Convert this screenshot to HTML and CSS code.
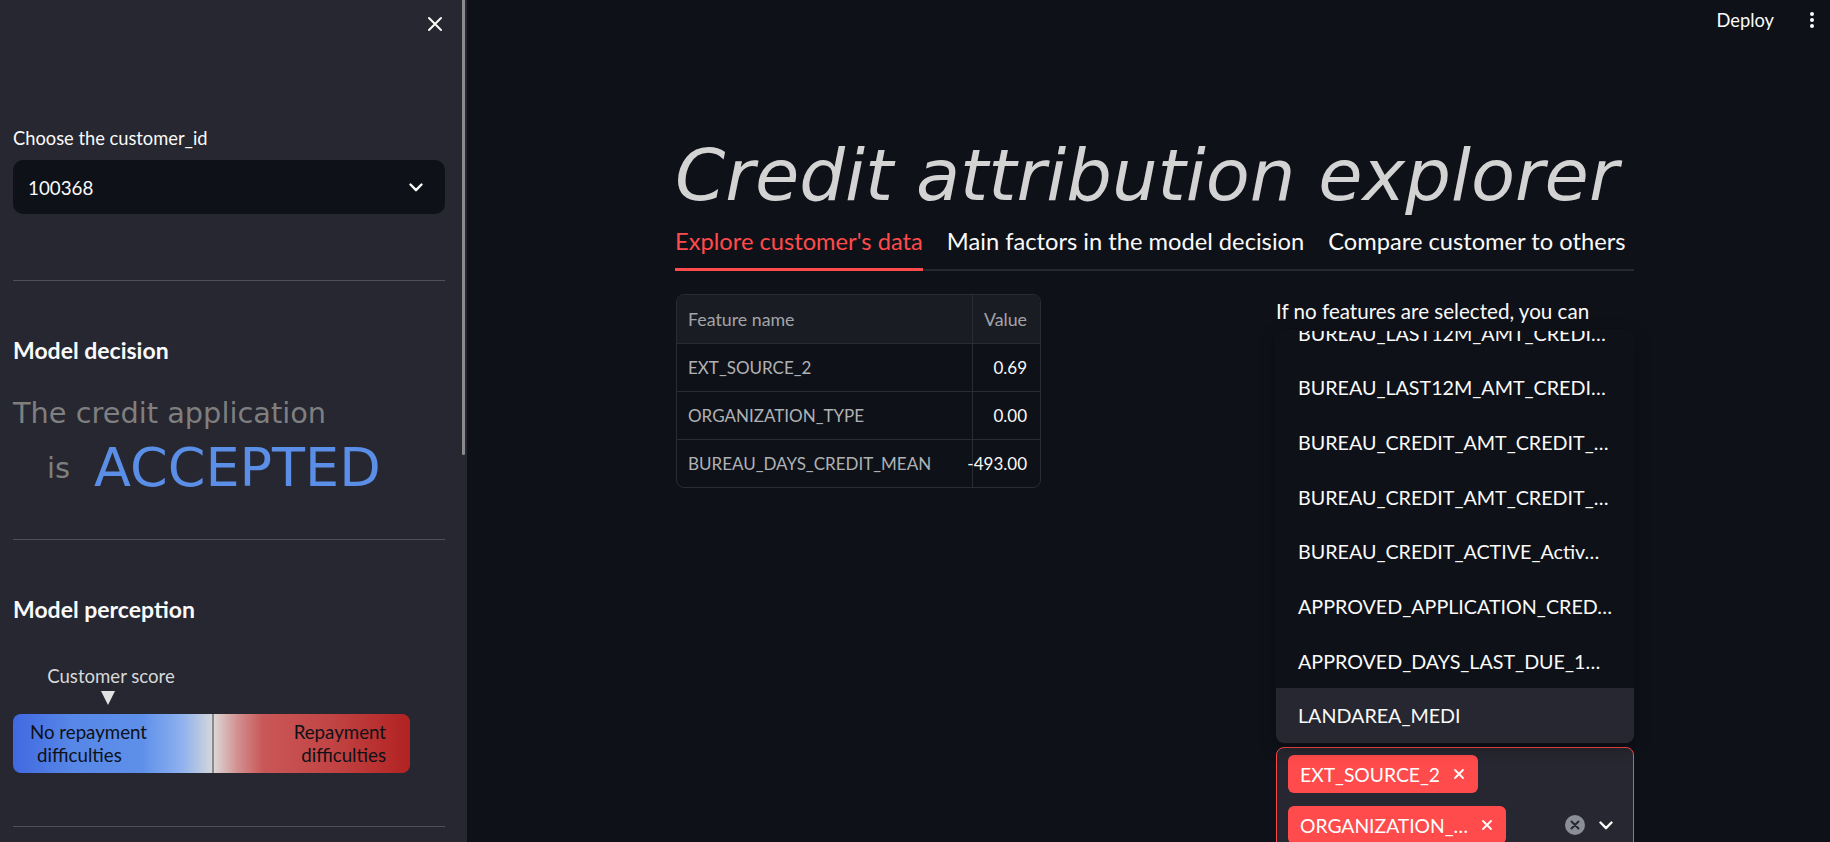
FILE: index.html
```html
<!DOCTYPE html>
<html lang="en">
<head>
<meta charset="utf-8">
<title>Credit attribution explorer</title>
<link rel="stylesheet" href="styles.css">
</head>
<body>
<div class="app">
  <aside class="sidebar">
    <div class="sb-thumb"></div>
    <div class="sb-header">
      <svg class="close" viewBox="0 0 16 16" aria-label="Close sidebar"><path d="M2 2 L14 14 M14 2 L2 14" stroke="#fafafa" stroke-width="2" stroke-linecap="round" fill="none"/></svg>
    </div>
    <label class="sb-label">Choose the customer_id</label>
    <div class="select">
      <span class="select-value">100368</span>
      <svg class="chev" viewBox="0 0 14 9"><path d="M1.5 1.5 L7 7.2 L12.5 1.5" stroke="#fafafa" stroke-width="2.4" stroke-linecap="round" stroke-linejoin="round" fill="none"/></svg>
    </div>
    <hr class="sb-hr hr1">
    <h3 class="sb-h">Model decision</h3>
    <div class="decision-1">The credit application</div>
    <div class="decision-2"><span class="is">is</span><span class="accepted">ACCEPTED</span></div>
    <hr class="sb-hr hr2">
    <h3 class="sb-h">Model perception</h3>
    <div class="score-track">
      <div class="score-marker" style="margin-left:95px">
        <span class="score-label">Customer score</span>
        <span class="tri"></span>
      </div>
    </div>
    <div class="gauge">
      <div class="gauge-half gauge-left"><span>No repayment<br><span class="indent">difficulties</span></span></div>
      <div class="gauge-half gauge-right"><span>Repayment<br>difficulties</span></div>
    </div>
    <hr class="sb-hr hr3">
  </aside>

  <main class="main">
    <div class="topbar">
      <span class="deploy">Deploy</span>
      <span class="kebab"><i></i><i></i><i></i></span>
    </div>
    <div class="content">
      <h1 class="title">Credit attribution explorer</h1>
      <div class="tabs">
        <span class="tab active">Explore customer's data</span>
        <span class="tab">Main factors in the model decision</span>
        <span class="tab">Compare customer to others</span>
      </div>
      <div class="columns">
        <div class="col-left">
          <div class="df">
            <div class="df-row df-head"><div class="c1">Feature name</div><div class="c2">Value</div></div>
            <div class="df-row"><div class="c1">EXT_SOURCE_2</div><div class="c2"><span>0.69</span></div></div>
            <div class="df-row"><div class="c1">ORGANIZATION_TYPE</div><div class="c2"><span>0.00</span></div></div>
            <div class="df-row"><div class="c1">BUREAU_DAYS_CREDIT_MEAN</div><div class="c2"><span>-493.00</span></div></div>
          </div>
        </div>
        <div class="col-right">
          <p class="help">If no features are selected, you can</p>
          <div class="ms">
            <div class="tags">
              <span class="tag">EXT_SOURCE_2<svg viewBox="0 0 12 12"><path d="M2 2 L10 10 M10 2 L2 10" stroke="#fff" stroke-width="1.8" stroke-linecap="round"/></svg></span>
              <span class="tag">ORGANIZATION_…<svg viewBox="0 0 12 12"><path d="M2 2 L10 10 M10 2 L2 10" stroke="#fff" stroke-width="1.8" stroke-linecap="round"/></svg></span>
              <span class="tag">BUREAU_DAYS_…<svg viewBox="0 0 12 12"><path d="M2 2 L10 10 M10 2 L2 10" stroke="#fff" stroke-width="1.8" stroke-linecap="round"/></svg></span>
            </div>
            <div class="ms-icons">
              <svg class="clear" viewBox="0 0 20 20"><circle cx="10" cy="10" r="10" fill="#8c8e97"/><path d="M6.5 6.5 L13.5 13.5 M13.5 6.5 L6.5 13.5" stroke="#262730" stroke-width="2" stroke-linecap="round"/></svg>
              <svg class="chev" viewBox="0 0 14 9"><path d="M1.5 1.5 L7 7.2 L12.5 1.5" stroke="#fafafa" stroke-width="2.4" stroke-linecap="round" stroke-linejoin="round" fill="none"/></svg>
            </div>
          </div>
          <div class="popover">
            <div class="opt">BUREAU_LAST12M_AMT_CREDI…</div>
            <div class="opt">BUREAU_LAST12M_AMT_CREDI…</div>
            <div class="opt">BUREAU_CREDIT_AMT_CREDIT_…</div>
            <div class="opt">BUREAU_CREDIT_AMT_CREDIT_…</div>
            <div class="opt">BUREAU_CREDIT_ACTIVE_Activ…</div>
            <div class="opt">APPROVED_APPLICATION_CRED…</div>
            <div class="opt">APPROVED_DAYS_LAST_DUE_1…</div>
            <div class="opt hover">LANDAREA_MEDI</div>
          </div>
        </div>
      </div>
    </div>
  </main>
</div>
</body>
</html>
```

FILE: styles.css
```css
html, body {
  margin: 0;
  padding: 0;
}
body {
  background: #0e1117;
  color: #fafafa;
  font-family: "Lato", "Noto Sans", sans-serif;
}
.app {
  display: flex;
  height: 842px;
  overflow: hidden;
}

/* ---------- sidebar ---------- */
.sidebar {
  position: relative;
  flex: none;
  width: 467px;
  height: 842px;
  box-sizing: border-box;
  padding: 0 22px 0 13px;
  background: #262730;
  overflow: hidden;
}
.sb-thumb {
  position: absolute;
  left: 462px;
  top: 0;
  width: 3px;
  height: 455px;
  background: #8a8a8c;
  border-radius: 0 0 2px 2px;
}
.sb-header {
  height: 48px;
  display: flex;
  justify-content: flex-end;
  align-items: center;
  padding-right: 2px;
}
.close {
  width: 16px;
  height: 16px;
}
.sb-label {
  display: block;
  margin-top: 77px;
  font-size: 18.3px;
  line-height: 26px;
}
.select {
  margin-top: 9px;
  height: 54px;
  box-sizing: border-box;
  border-radius: 10px;
  background: #0e1117;
  display: flex;
  align-items: center;
  justify-content: space-between;
  padding: 0 22px 0 15px;
}
.select-value {
  font-size: 18.8px;
}
.chev {
  width: 14px;
  height: 9px;
}
.sb-hr {
  border: 0;
  height: 1px;
  background: #4f5058;
  margin: 0;
}
.hr1 { margin-top: 66px; }
.hr2 { margin-top: 39px; }
.hr3 { margin-top: 53px; }
.sb-h {
  margin: 54px 0 0;
  font-size: 23px;
  line-height: 30px;
  font-weight: 700;
}
.decision-1 {
  margin-top: 31px;
  font-family: "DejaVu Sans", sans-serif;
  font-size: 28.8px;
  line-height: 34px;
  color: #7f7f7f;
  white-space: nowrap;
}
.decision-2 {
  margin-top: 6px;
  height: 64px;
  display: flex;
  align-items: center;
  font-family: "DejaVu Sans", sans-serif;
  color: #7f7f7f;
  white-space: nowrap;
}
.is {
  margin-left: 34px;
  font-size: 28.8px;
  line-height: 34px;
}
.accepted {
  margin-left: 24px;
  font-size: 54px;
  line-height: 64px;
  color: #5b8ee6;
}
.score-track {
  margin-top: 39px;
  height: 42px;
}
.score-marker {
  width: 0;
  display: flex;
  flex-direction: column;
  align-items: center;
}
.score-label {
  font-size: 18.6px;
  line-height: 26px;
  white-space: nowrap;
  color: #d8d8da;
  padding-left: 6px;
}
.tri {
  margin-top: 2px;
  width: 0;
  height: 0;
  border-left: 7px solid transparent;
  border-right: 7px solid transparent;
  border-top: 14px solid #e2e2e2;
}
.gauge {
  margin-top: 9px;
  width: 397px;
  height: 59px;
  border-radius: 8px;
  overflow: hidden;
  display: flex;
}
.gauge-half {
  flex: none;
  width: 50%;
  box-sizing: border-box;
  display: flex;
  align-items: center;
  font-size: 18.7px;
  line-height: 23px;
  color: #0e1117;
  white-space: nowrap;
}
.gauge-left {
  padding-left: 17px;
  background: linear-gradient(to right, #4169e1 0%, #5787e7 30%, #5e90ea 65%, #8fb1ee 85%, #d3d6db 100%);
}
.indent {
  padding-left: 7px;
}
.gauge-right {
  justify-content: flex-end;
  text-align: right;
  padding-right: 24px;
  border-left: 2px solid #8a8a8a;
  background: linear-gradient(to right, #dcd6d6 0%, #d29090 12%, #c95757 25%, #c24444 60%, #b22222 100%);
}

/* ---------- main ---------- */
.main {
  flex: 1;
  min-width: 0;
  position: relative;
}
.topbar {
  height: 40px;
  display: flex;
  justify-content: flex-end;
  align-items: center;
  gap: 36px;
  padding-right: 16px;
}
.deploy {
  font-size: 18.3px;
  line-height: 26px;
}
.kebab {
  display: flex;
  flex-direction: column;
  gap: 2.3px;
}
.kebab i {
  display: block;
  width: 4px;
  height: 4px;
  border-radius: 50%;
  background: #fafafa;
}
.content {
  width: 959px;
  margin-left: 208px;
  padding-top: 92px;
}
.title {
  margin: 0;
  font-family: "DejaVu Sans", sans-serif;
  font-style: italic;
  font-weight: 400;
  font-size: 72px;
  line-height: 86px;
  color: #d3d3d3;
  white-space: nowrap;
}
.tabs {
  margin-top: 6px;
  display: flex;
  gap: 24px;
  border-bottom: 2px solid #262730;
}
.tab {
  font-size: 23.7px;
  line-height: 34px;
  padding-bottom: 10px;
  border-bottom: 3px solid transparent;
  margin-bottom: -2px;
  color: #fafafa;
  white-space: nowrap;
}
.tab.active {
  color: #ff4b4b;
  border-bottom-color: #ff4b4b;
}
.columns {
  margin-top: 23px;
  display: grid;
  grid-template-columns: 579px 358px;
  column-gap: 22px;
  align-items: start;
}

/* dataframe */
.df {
  margin-left: 1px;
  width: 365px;
  box-sizing: border-box;
  border: 1px solid #2a2c33;
  border-radius: 8px;
  overflow: hidden;
  font-size: 17px;
}
.df-row {
  display: grid;
  grid-template-columns: 295px 1fr;
  height: 48px;
  box-sizing: border-box;
  border-top: 1px solid #2a2c33;
}
.df-row.df-head {
  border-top: 0;
  background: #1a1c24;
  color: #a3a4a8;
  font-size: 17.8px;
}
.c1 {
  display: flex;
  align-items: center;
  padding-left: 11px;
  color: #b0b1b5;
  white-space: nowrap;
}
.df-head .c1 { color: #a3a4a8; }
.c2 {
  display: flex;
  align-items: center;
  justify-content: flex-end;
  padding-right: 13px;
  border-left: 1px solid #2a2c33;
  white-space: nowrap;
  min-width: 0;
}
.c2 span { flex: none; }

/* right column */
.col-right {
  position: relative;
}
.help {
  margin: 0;
  min-height: 453px;
  font-size: 20.6px;
  line-height: 34px;
}
.ms {
  border: 1px solid #ff4b4b;
  border-radius: 8px;
  background: #262730;
  display: flex;
  align-items: center;
  padding: 7px 0 7px 11px;
}
.tags {
  flex: 1;
  display: flex;
  flex-wrap: wrap;
  row-gap: 13px;
  column-gap: 8px;
}
.tag {
  height: 38px;
  box-sizing: border-box;
  border-radius: 6px;
  background: #ff4b4b;
  display: flex;
  align-items: center;
  gap: 13px;
  padding: 0 13px 0 12px;
  font-size: 19.3px;
  color: #fff;
  white-space: nowrap;
}
.tag svg {
  width: 12px;
  height: 12px;
}
.ms-icons {
  display: flex;
  align-items: center;
  gap: 14px;
  padding-right: 20px;
}
.clear {
  width: 20px;
  height: 20px;
}
.popover {
  position: absolute;
  top: 37px;
  left: 0;
  width: 358px;
  height: 412px;
  background: #0e1117;
  border-radius: 8px;
  box-shadow: 0 4px 16px rgba(0, 0, 0, 0.35), 0 0 0 1px rgba(255, 255, 255, 0.02);
  overflow: hidden;
  display: flex;
  flex-direction: column;
  justify-content: flex-end;
}
.opt {
  flex: none;
  height: 54.67px;
  display: flex;
  align-items: center;
  padding: 0 22px;
  font-size: 19.7px;
  white-space: nowrap;
  overflow: hidden;
}
.opt.hover {
  background: #262730;
}
```
